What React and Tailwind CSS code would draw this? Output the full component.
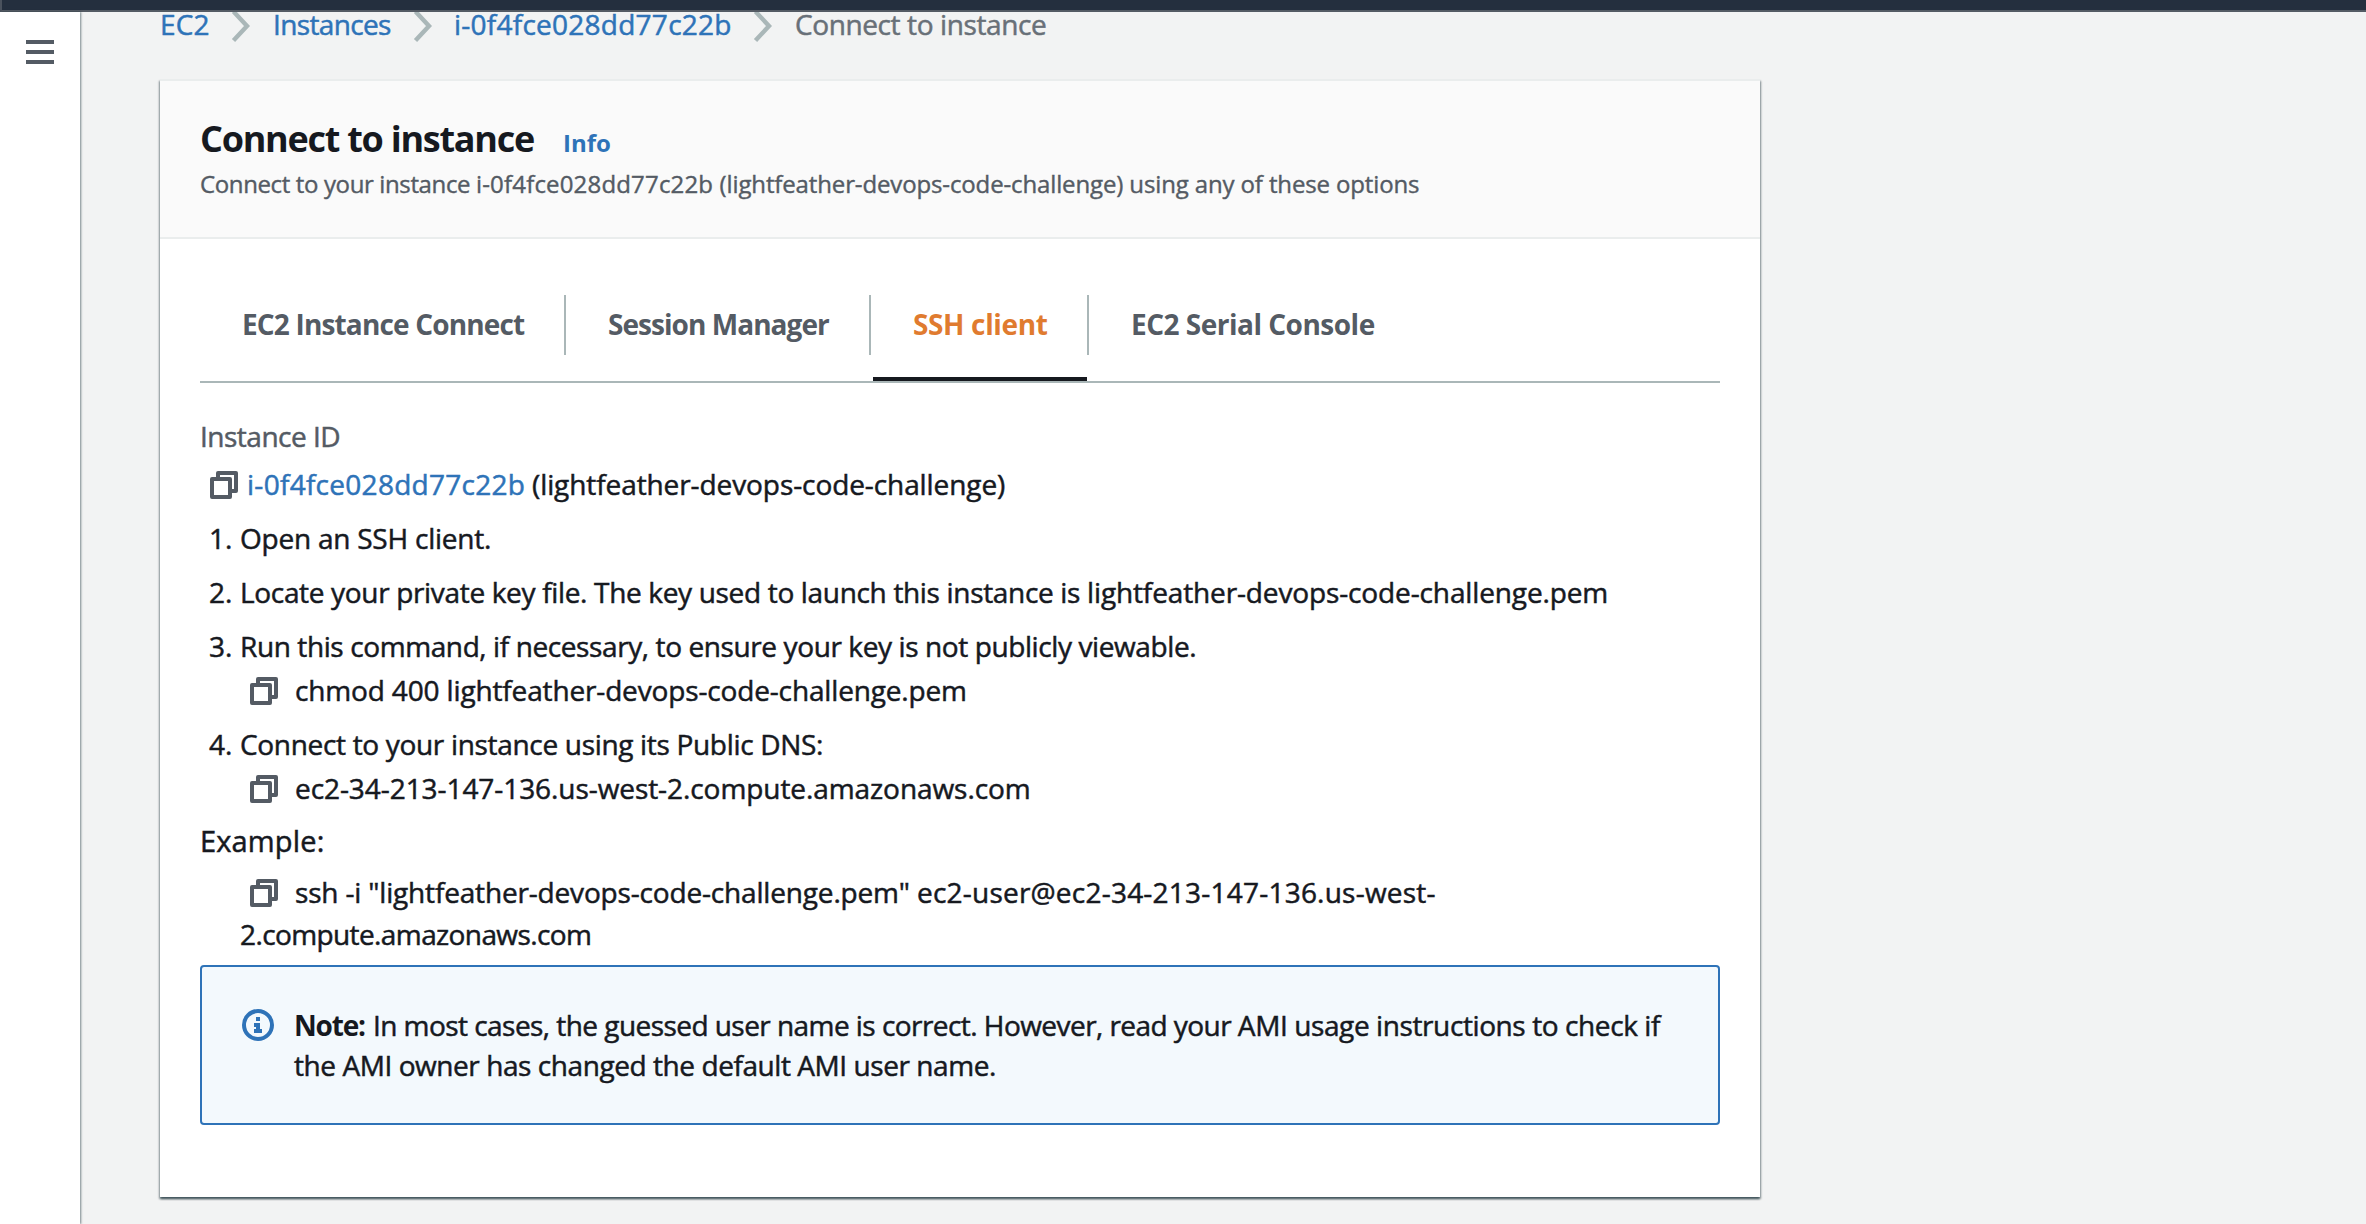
import React from "react";

function CopyIcon({ className }) {
  return (
    <svg className={`shrink-0 ${className}`} width="28" height="28" viewBox="0 0 28 28" fill="none" stroke="#545b64" strokeWidth="4" strokeLinejoin="round">
      <path d="M8 7V2h18v18h-5" />
      <path d="M2 8h18v18H2z" />
    </svg>
  );
}

function Chevron({ className }) {
  return (
    <svg className={`shrink-0 ${className}`} width="20" height="32" viewBox="0 0 20 32" fill="none" stroke="#aab7b8" strokeWidth="4.4">
      <path d="M2.5 1.5L16 16L2.5 30.5" />
    </svg>
  );
}

function InfoIcon() {
  return (
    <svg className="mt-1 shrink-0" width="32" height="32" viewBox="0 0 32 32" fill="none" stroke="#2e73b8" strokeWidth="4">
      <circle cx="16" cy="16" r="14" />
      <path d="M16 8v4M12 16h6M16 14v8M12 22h8" />
    </svg>
  );
}

function Tab({ children, className }) {
  return <div className={`h-[60px] leading-[58px] font-bold ${className}`}>{children}</div>;
}

export default function App() {
  return (
    <div className="flex h-[1224px] w-[2366px] flex-col overflow-hidden bg-[#f2f3f3] font-['Open_Sans',sans-serif] text-[28px] leading-[42px] whitespace-nowrap text-[#16191f]">
      <div className="h-3 shrink-0 border-b-2 border-l-2 border-b-[#545b64] border-l-[#4a525d] bg-[#242f3e]" />
      <div className="flex min-h-0 flex-1">
        <aside className="w-20 shrink-0 bg-white pt-7 pl-[26px] shadow-[1px_0_2px_rgba(0,28,36,0.5)]">
          <div className="flex w-7 flex-col gap-1.5">
            <div className="h-1 bg-[#545b64]" />
            <div className="h-1 bg-[#545b64]" />
            <div className="h-1 bg-[#545b64]" />
          </div>
        </aside>
        <main className="min-w-0 flex-1 overflow-hidden pl-20">
          <nav className="-mt-[9px] flex h-[42px] items-center text-[#2e73b8] [-webkit-text-stroke:0.5px_currentColor]">
            <span className="w-[71px] tracking-[0.2px]">EC2</span>
            <Chevron className="mt-1" />
            <span className="ml-[22px] w-[138px] tracking-[-0.65px]">Instances</span>
            <Chevron className="mt-1 ml-0.5" />
            <span className="ml-[21px] w-[297px] tracking-[0.25px]">i-0f4fce028dd77c22b</span>
            <Chevron className="mt-1 ml-0.5" />
            <span className="ml-[22px] tracking-[-0.39px] text-[#687078]">Connect to instance</span>
          </nav>

          <section className="mt-[34px] h-[1118px] w-[1600px] border-t-2 border-[#eaeded] bg-white shadow-[0_2px_2px_rgba(0,28,36,0.4),1px_2px_2px_rgba(0,28,36,0.35),-1px_2px_2px_rgba(0,28,36,0.3)]">
            <header className="h-[158px] border-b-2 border-[#eaeded] bg-[#fafafa] pt-[38px] pl-10">
              <div className="flex items-baseline leading-10">
                <h1 className="w-[363px] text-[36px] font-bold tracking-[-1.26px]">Connect to instance</h1>
                <span className="text-[24px] font-bold text-[#2e73b8]">Info</span>
              </div>
              <p className="mt-[3px] text-[24px] leading-9 tracking-[-0.131px] text-[#545b64] [-webkit-text-stroke:0.4px_currentColor]">
                <span className="tracking-[-0.37px]">Connect to your instance </span>
                <span className="tracking-[0.17px]">i-0f4fce028dd77c22b </span>
                (lightfeather-devops-code-challenge) using any of these options
              </p>
            </header>

            <div className="px-10 pt-14">
              <div className="flex h-[88px] border-b-2 border-[#aab7b8] text-[#545b64]">
                <Tab className="w-[366px] border-r-2 border-[#aab7b8] pl-[42px] tracking-[-0.84px]">EC2 Instance Connect</Tab>
                <Tab className="w-[305px] border-r-2 border-[#aab7b8] pl-[42px] tracking-[-0.95px]">Session Manager</Tab>
                <div className="flex w-[218px] flex-col justify-between">
                  <Tab className="border-r-2 border-[#aab7b8] pl-[42px] tracking-[-0.36px] text-[#e07b2f]">SSH client</Tab>
                  <div className="mr-0.5 ml-0.5 h-1 bg-[#16191f]" />
                </div>
                <Tab className="pl-[42px] tracking-[-0.5px]">EC2 Serial Console</Tab>
              </div>

              <div className="[-webkit-text-stroke:0.5px_currentColor]">
                <div className="mt-8 tracking-[-0.5px] text-[#545b64]">Instance ID</div>
                <div className="mt-1.5 flex items-center pl-2.5">
                  <CopyIcon className="mt-px" />
                  <span className="ml-[9px] w-[285px] tracking-[0.28px] text-[#2e73b8]">i-0f4fce028dd77c22b</span>
                  <span className="tracking-[-0.09px]">(lightfeather-devops-code-challenge)</span>
                </div>

                <ol>
                  <li className="mt-3 flex">
                    <span className="w-10 pl-[9px]">1.</span>
                    <span className="tracking-[-0.23px]">Open an SSH client.</span>
                  </li>
                  <li className="mt-3 flex">
                    <span className="w-10 pl-[9px]">2.</span>
                    <span className="tracking-[-0.33px]">
                      Locate your private key file. The key used to launch this instance is <span className="tracking-[-0.13px]">lightfeather-devops-code-challenge.pem</span>
                    </span>
                  </li>
                  <li className="mt-3">
                    <div className="flex">
                      <span className="w-10 pl-[9px]">3.</span>
                      <span className="tracking-[-0.396px]">Run this command, if necessary, to ensure your key is not publicly viewable.</span>
                    </div>
                    <div className="mt-0.5 flex items-center pl-[50px]">
                      <CopyIcon className="mt-0.5" />
                      <span className="ml-[17px] tracking-[-0.15px]">chmod 400 lightfeather-devops-code-challenge.pem</span>
                    </div>
                  </li>
                  <li className="mt-3">
                    <div className="flex">
                      <span className="w-10 pl-[9px]">4.</span>
                      <span className="tracking-[-0.32px]">Connect to your instance using its Public DNS:</span>
                    </div>
                    <div className="mt-0.5 flex items-center pl-[50px]">
                      <CopyIcon className="mt-0.5" />
                      <span className="ml-[17px] tracking-[-0.07px]">ec2-34-213-147-136.us-west-2.compute.amazonaws.com</span>
                    </div>
                  </li>
                </ol>

                <div className="mt-[11px] text-[29px] tracking-[0.15px]">Example:</div>
                <div className="mt-[9px]">
                  <div className="flex items-center pl-[50px]">
                    <CopyIcon className="mt-px" />
                    <span className="ml-[17px] tracking-[-0.17px]">
                      ssh -i "lightfeather-devops-code-challenge.pem" <span className="tracking-[0.22px]">ec2-user@ec2-34-213-147-136.us-west-</span>
                    </span>
                  </div>
                  <div className="pl-10 tracking-[-0.604px]">2.compute.amazonaws.com</div>
                </div>
              </div>

              <div className="mt-2.5 flex h-40 rounded-[4px] border-2 border-[#2e73b8] bg-[#f3f9fd] pt-[38px] pl-10 leading-10">
                <InfoIcon />
                <div className="ml-5 [-webkit-text-stroke:0.5px_currentColor]">
                  <div className="flex">
                    <b className="w-[79px] tracking-[-1.2px] [-webkit-text-stroke:0]">Note:</b>
                    <span className="tracking-[-0.55px]">
                      In most cases, the guessed user name is correct. However, read your <span className="tracking-[-0.4px]">AMI usage instructions to check if</span>
                    </span>
                  </div>
                  <div className="tracking-[-0.433px]">the AMI owner has changed the default AMI user name.</div>
                </div>
              </div>
            </div>
          </section>
        </main>
      </div>
    </div>
  );
}
